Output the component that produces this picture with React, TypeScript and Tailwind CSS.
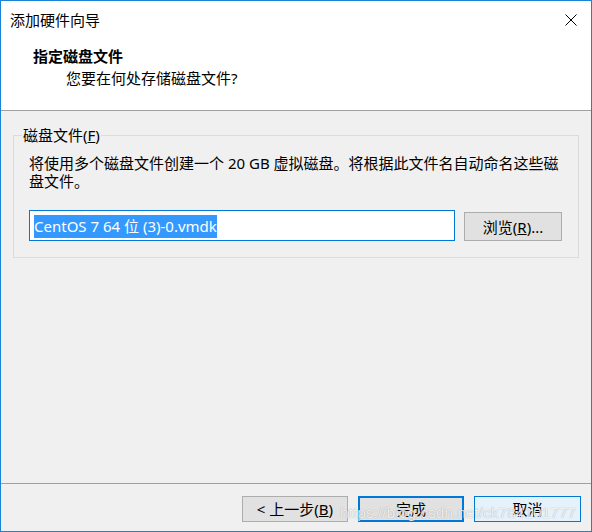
import React from "react";

const font = "font-['Noto_Sans','Noto_Sans_CJK_SC',sans-serif]";

function CloseIcon() {
  return (
    <svg width="12" height="12" viewBox="0 0 12 12" className="block">
      <path d="M0.5 0.5 L11.5 11.5 M11.5 0.5 L0.5 11.5" stroke="#000" strokeWidth="1" fill="none" />
    </svg>
  );
}

export default function App() {
  return (
    <div className={`relative w-[592px] h-[532px] flex flex-col border border-[#1883d7] bg-[#f0f0f0] text-black ${font}`}>
      {/* title bar */}
      <div className="h-[37px] bg-white flex items-center justify-between pl-[9px] pr-[14px]">
        <span className="text-[15px] leading-[20px]">添加硬件向导</span>
        <CloseIcon />
      </div>

      {/* header */}
      <div className="h-[73px] bg-white border-b border-[#a0a0a0] pt-[8px] pl-[32px]">
        <div className="text-[15px] leading-[20px] font-bold">指定磁盘文件</div>
        <div className="text-[15px] leading-[20px] mt-[2px] pl-[33px]">您要在何处存储磁盘文件?</div>
      </div>

      {/* body */}
      <div className="flex-1 px-[12px] pt-[14px]">
        <fieldset className="border border-[#dcdcdc] px-[15px] pb-[16px]">
          <legend className="ml-[-7px] px-[1px] text-[15px] leading-[20px]">
            磁盘文件(<u>F</u>)
          </legend>
          <p className="mt-[9px] text-[15px] leading-[18px] pr-[4px]">
            将使用多个磁盘文件创建一个 20 GB 虚拟磁盘。将根据此文件名自动命名这些磁盘文件。
          </p>
          <div className="mt-[20px] flex items-end">
            <div className="w-[426px] h-[31px] border border-[#0078d7] bg-white flex items-center pl-[4px] pt-[1px]">
              <span className="bg-[#3399ff] text-white text-[15px] leading-[23px] whitespace-nowrap">
                CentOS 7 64 位 (3)-0.vmdk
              </span>
            </div>
            <button className="ml-[9px] w-[98px] h-[29px] border border-[#adadad] bg-[#e1e1e1] text-[15px] leading-[20px]">
              浏览(<u>R</u>)...
            </button>
          </div>
        </fieldset>
      </div>

      {/* footer */}
      <div className="h-[48px] border-t border-[#a0a0a0] flex justify-end items-start gap-[10px] pt-[12px] pr-[10px]">
        <button className="w-[106px] h-[26px] border border-[#adadad] bg-[#e1e1e1] text-[15px] leading-[20px]">
          &lt; 上一步(<u>B</u>)
        </button>
        <button className="w-[106px] h-[26px] border-2 border-[#0078d7] bg-[#e1e1e1] text-[15px] leading-[20px]">
          完成
        </button>
        <button className="w-[107px] h-[26px] border border-[#0078d7] bg-[#e5f1fb] text-[15px] leading-[20px]">
          取消
        </button>
      </div>

      {/* watermark */}
      <div className="absolute left-[339px] top-[500px] font-['Liberation_Sans',sans-serif] text-[15.5px] text-white/85 [text-shadow:0_0_1px_rgba(0,0,0,0.4)] pointer-events-none whitespace-nowrap">
        https://blog.csdn.net/ck784101777
      </div>
    </div>
  );
}
